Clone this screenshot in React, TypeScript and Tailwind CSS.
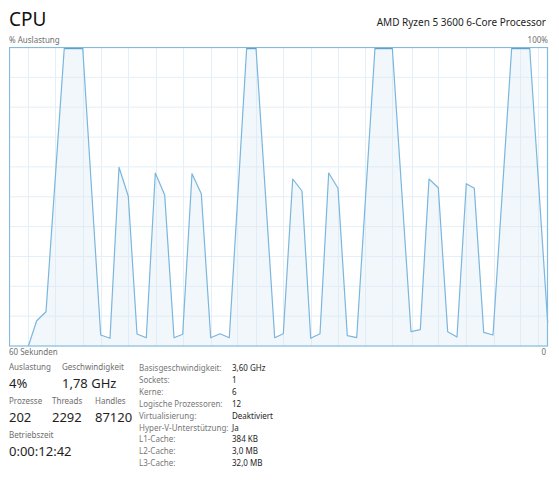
import React from 'react'

const font = { fontFamily: '"Noto Sans", "Open Sans", sans-serif' }

// sample points of the cpu curve (page coords)
const points: [number, number][] = [
  [28.3, 343.3], [36.7, 317.7], [46, 308.7], [64.3, 44.7], [82.7, 44.7],
  [100.7, 332], [110, 335.3], [119, 164.3], [128.3, 193.3], [137, 331],
  [146.3, 334.7], [155.3, 170], [164.7, 192], [174, 334.7], [182.7, 331.3],
  [192, 170.7], [201.3, 190.7], [210.7, 334.7], [220, 330.7], [229.3, 334.7],
  [246.7, 44.7], [256, 44.7], [274.7, 334.7], [283.3, 330.7], [292.7, 176],
  [302, 188], [310.7, 335.3], [320, 330.7], [328.7, 170], [338, 185.3],
  [347.3, 332.7], [356.7, 334.7], [375, 44.7], [392.3, 44.7], [411, 328.7],
  [420.3, 326.7], [429, 176], [438.3, 184.7], [447.7, 328.7], [457, 334],
  [466.3, 180.7], [474.3, 185.3], [483.7, 329.3], [493, 332], [511.7, 44.7],
  [529.7, 44.7], [547.7, 320],
]

const vLines = [28, 55, 83, 101, 128, 156, 183, 211, 237, 256, 283, 311, 338, 365, 392, 412, 438, 466, 494, 520, 538]
const hLines = [1, 2, 3, 4, 5, 6, 7, 8, 9].map((k) => 44.5 + 29.85 * k)
const topRuns: [number, number][] = [[64.3, 82.7], [246.7, 256], [375, 392.3], [511.7, 529.7]]

function CpuGraph() {
  const line = points.map(([x, y]) => `${x},${y}`).join(' ')
  const fill = `${line} 547.7,343 28.3,343`
  return (
    <svg width={540} height={300} viewBox="9 44 540 300" className="block">
      <rect x={9} y={44} width={540} height={300} fill="#ffffff" />
      {vLines.map((x) => (
        <line key={'v' + x} x1={x + 0.5} y1={44.5} x2={x + 0.5} y2={343} stroke="#e4eff7" strokeWidth={1} />
      ))}
      {hLines.map((y) => (
        <line key={'h' + y} x1={9.5} y1={y} x2={547.5} y2={y} stroke="#e4eff7" strokeWidth={1} />
      ))}
      <polygon points={fill} fill="#dbe9f4" fillOpacity={0.35} />
      <polyline points={line} fill="none" stroke="#7ab6dd" strokeWidth={1.2} strokeLinejoin="round" />
      {topRuns.map(([a, b]) => (
        <line key={'t' + a} x1={a} y1={45.2} x2={b} y2={45.2} stroke="#5a9ecb" strokeWidth={2} />
      ))}
      <rect x={9.5} y={44.5} width={538} height={298.5} fill="none" stroke="#82bbe0" strokeWidth={1.2} />
    </svg>
  )
}

function Stat({ label, value, className = '' }: { label: string; value: string; className?: string }) {
  return (
    <div className={className}>
      <div className="text-[8px] leading-[10px] text-[#6e6e6e] whitespace-nowrap">{label}</div>
      <div className="mt-[3px] text-[13px] leading-[16px] text-[#1e1e1e] whitespace-nowrap">{value}</div>
    </div>
  )
}

const specs: [string, string][] = [
  ['Basisgeschwindigkeit:', '3,60 GHz'],
  ['Sockets:', '1'],
  ['Kerne:', '6'],
  ['Logische Prozessoren:', '12'],
  ['Virtualisierung:', 'Deaktiviert'],
  ['Hyper-V-Unterstützung:', 'Ja'],
  ['L1-Cache:', '384 KB'],
  ['L2-Cache:', '3,0 MB'],
  ['L3-Cache:', '32,0 MB'],
]

export default function App() {
  return (
    <div className="w-[559px] h-[480px] bg-white overflow-hidden" style={font}>
      <div className="pt-[10px] pl-[9px] pr-[13px] flex justify-between items-baseline">
        <div className="text-[19px] leading-[18px] text-[#111]">CPU</div>
        <div className="text-[10px] leading-[18px] text-[#1e1e1e]">AMD Ryzen 5 3600 6-Core Processor</div>
      </div>
      <div className="mt-[4px] pl-[9px] pr-[11px] flex justify-between text-[8px] leading-[10px] text-[#707070]">
        <span>% Auslastung</span>
        <span>100%</span>
      </div>
      <div className="mt-[2px] pl-[9px]">
        <CpuGraph />
      </div>
      <div className="pl-[9px] pr-[13px] flex justify-between text-[8px] leading-[10px] text-[#707070]">
        <span>60 Sekunden</span>
        <span>0</span>
      </div>
      <div className="mt-[5px] pl-[9px] flex">
        <div className="w-[130px] flex flex-col gap-[5px]">
          <div className="flex">
            <Stat label="Auslastung" value="4%" className="w-[53px]" />
            <Stat label="Geschwindigkeit" value="1,78 GHz" />
          </div>
          <div className="flex">
            <Stat label="Prozesse" value="202" className="w-[43px]" />
            <Stat label="Threads" value="2292" className="w-[43px]" />
            <Stat label="Handles" value="87120" />
          </div>
          <Stat label="Betriebszeit" value="0:00:12:42" />
        </div>
        <div className="grid grid-cols-[93px_auto] text-[8px] leading-[11.9px]">
          {specs.map(([k, v]) => (
            <React.Fragment key={k}>
              <div className="text-[#777] whitespace-nowrap">{k}</div>
              <div className="text-[#1e1e1e] whitespace-nowrap">{v}</div>
            </React.Fragment>
          ))}
        </div>
      </div>
    </div>
  )
}
